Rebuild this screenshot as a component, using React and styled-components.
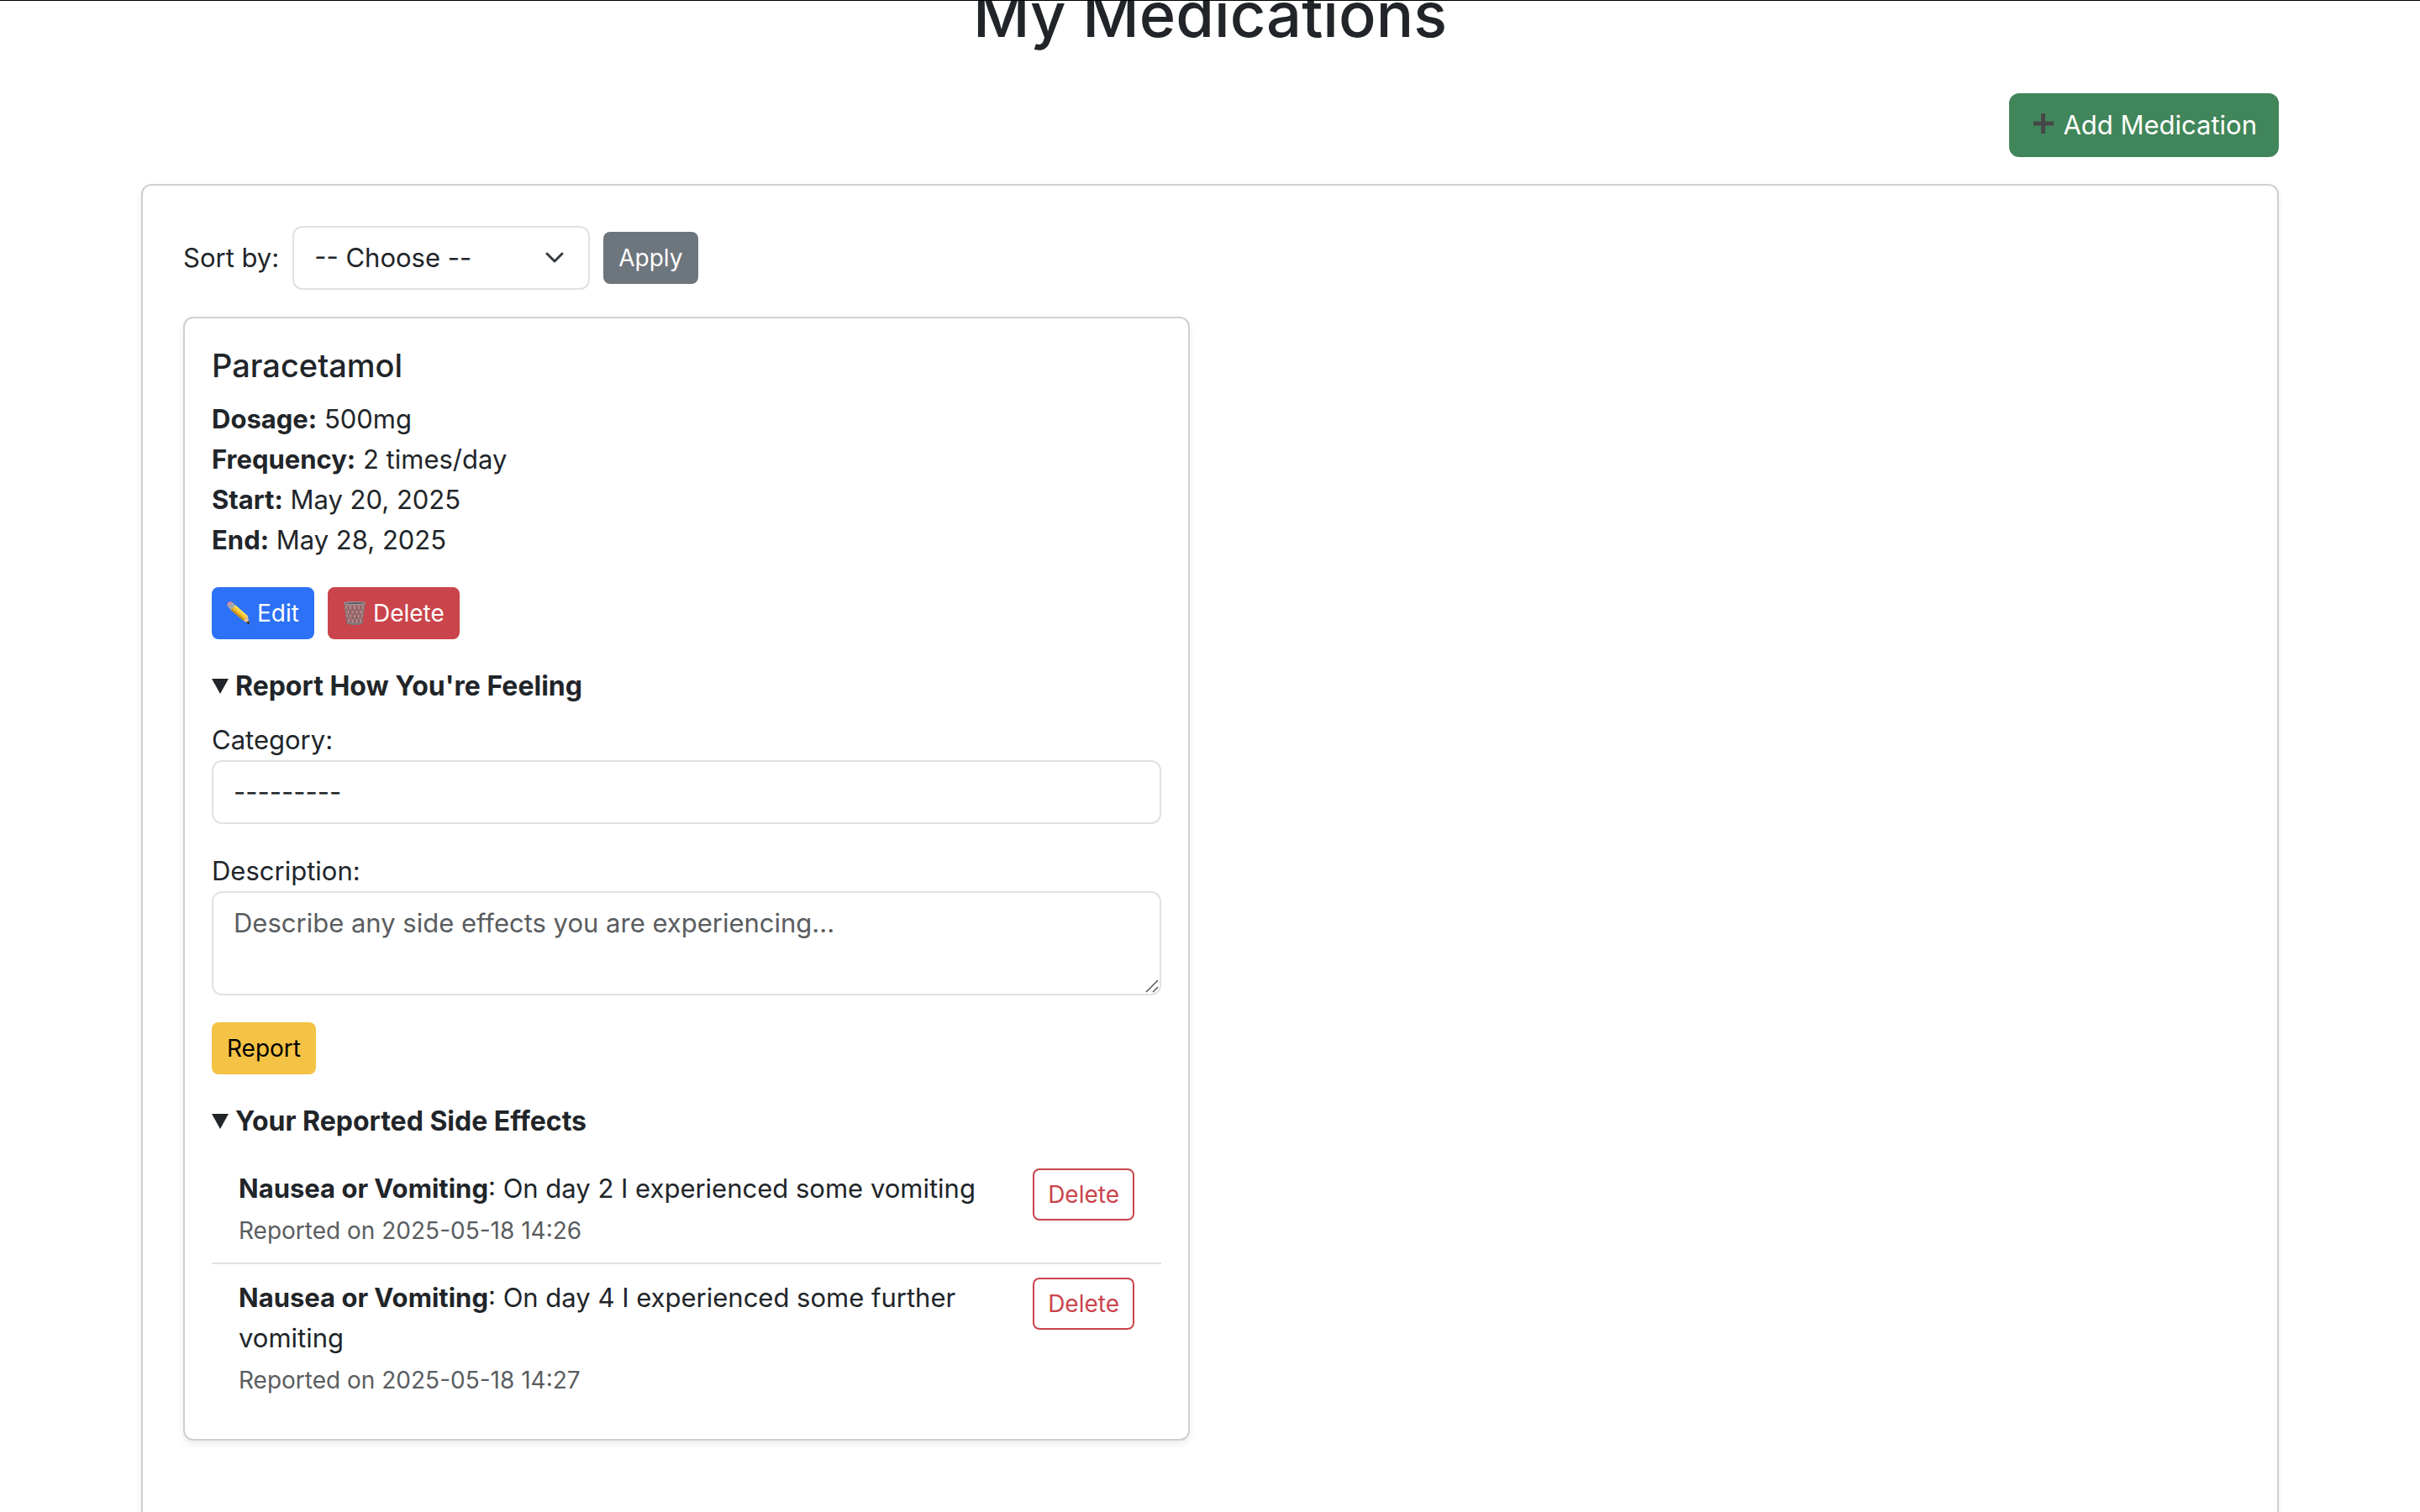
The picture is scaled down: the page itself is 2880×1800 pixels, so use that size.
import React from "react";
import styled, { createGlobalStyle, css } from "styled-components";

const GlobalStyle = createGlobalStyle`
  *, *::before, *::after { box-sizing: border-box; }
  body {
    margin: 0;
    background: #fff;
    color: #212529;
    font-family: Inter, "Liberation Sans", sans-serif;
    font-size: 31px;
    line-height: 48px;
  }
`;

const Page = styled.div`
  min-height: 100vh;
  overflow: hidden;
  border-top: 1px solid #000;
`;

const Container = styled.main`
  max-width: 2640px;
  margin: -32px auto 0;
  padding: 0 48px;
`;

const PageTitle = styled.h1`
  margin: 0 0 46px;
  font-size: 74px;
  font-weight: 500;
  line-height: 96px;
  text-align: center;
`;

const PageActions = styled.div`
  display: flex;
  justify-content: flex-end;
  margin-bottom: 32px;
`;

const variants = {
  success: css`background: #41865a; border-color: #41865a; color: #fff;`,
  primary: css`background: #2c71f6; border-color: #2c71f6; color: #fff;`,
  danger: css`background: #ca444b; border-color: #ca444b; color: #fff;`,
  secondary: css`background: #6d757d; border-color: #6d757d; color: #fff;`,
  warning: css`background: #f4c244; border-color: #f4c244; color: #000;`,
  outlineDanger: css`background: transparent; border-color: #ca444b; color: #ca444b;`,
};

const Button = styled.button`
  display: inline-flex;
  flex: none;
  align-items: center;
  gap: 8px;
  padding: 8px 16px;
  border: 2px solid;
  border-radius: 8px;
  font: inherit;
  font-size: 28px;
  line-height: 42px;
  cursor: pointer;
  ${(p) => variants[p.$variant]}
`;

const LargeButton = styled(Button)`
  padding: 12px 24px;
  border-radius: 12px;
  font-size: 31px;
  line-height: 48px;
`;

const cardFrame = css`
  border: 2px solid #d0d0d1;
  border-radius: 12px;
  background: #fff;
  box-shadow: 0 4px 8px rgba(0, 0, 0, 0.075);
`;

const Panel = styled.section`
  ${cardFrame}
  padding: 48px 48px 96px;
`;

const SortForm = styled.form`
  display: flex;
  align-items: center;
  gap: 16px;
  margin-bottom: 32px;
`;

const fieldFrame = css`
  display: block;
  width: 100%;
  margin: 0;
  padding: 12px 24px;
  border: 2px solid #dee2e6;
  border-radius: 12px;
  background: #fff;
  color: #212529;
  font: inherit;
  appearance: none;
`;

const SelectField = styled.select`
  ${fieldFrame}
  height: 76px;
`;

const TextField = styled.textarea`
  ${fieldFrame}
  resize: none;
  &::placeholder { color: #5a5d60; opacity: 1; }
`;

const Stack = styled.div`
  display: grid;
  width: ${(p) => p.$width || "auto"};
  > * { grid-area: 1 / 1; }
`;

const Chevron = styled.svg`
  align-self: center;
  justify-self: end;
  margin-right: 26px;
  pointer-events: none;
`;

const Grip = styled.svg`
  align-self: end;
  justify-self: end;
  margin: 0 3px 3px 0;
  pointer-events: none;
`;

const CardGrid = styled.div`
  display: grid;
  grid-template-columns: 1fr 1fr;
  gap: 48px;
`;

const Card = styled.article`
  ${cardFrame}
  padding: 32px;
`;

const CardTitle = styled.h2`
  margin: 0 0 16px;
  font-size: 38px;
  font-weight: 500;
  line-height: 48px;
`;

const Facts = styled.p`
  margin: 0 0 32px;
`;

const ButtonRow = styled.div`
  display: flex;
  gap: 16px;
`;

const Disclosure = styled.details`
  margin-top: 32px;
`;

const DisclosureTitle = styled.summary`
  display: flex;
  align-items: center;
  gap: 8px;
  margin-bottom: 16px;
  font-size: 32px;
  font-weight: 700;
  list-style: none;
  cursor: pointer;
  &::before {
    content: "";
    width: 20px;
    height: 18px;
    background: #212529;
    clip-path: polygon(0 0, 100% 0, 50% 100%);
  }
  details:not([open]) > &::before {
    transform: rotate(-90deg);
  }
`;

const Field = styled.div`
  margin-bottom: 32px;
`;

const Label = styled.label`
  display: block;
`;

const ReportList = styled.ul`
  margin: 0;
  padding: 0;
  list-style: none;
`;

const ReportItem = styled.li`
  display: flex;
  align-items: flex-start;
  justify-content: space-between;
  padding: 16px 32px;
  & + & { border-top: 2px solid #dee2e6; }
`;

const ReportDate = styled.small`
  display: block;
  padding-top: 4px;
  color: #5a5d60;
  font-size: 28px;
  line-height: 44px;
`;

const PlusIcon = () => (
  <svg width="30" height="32" viewBox="2 0 30 32" aria-hidden="true">
    <path d="M14 2h5v9.500h10v5H19V26h-5v-9.500H5v-5h9z" fill="#474747" />
  </svg>
);

const PencilIcon = () => (
  <svg width="28" height="28" viewBox="0 0 28 28" aria-hidden="true">
    <path d="M1.200 1.800Q4-.8 6.500.7L8.300 3 3.200 8 .9 5.600Q-.3 3.600 1.200 1.800z" fill="#ef8d92" />
    <path d="M6.300.8 11 5.200 5.200 11 1 6z" fill="#8c98a5" />
    <path d="M7.500 2.200 2.400 7.400M9.200 3.800 3.800 9.200" stroke="#c8d0d7" strokeWidth="1" />
    <path d="M10.200 4.600 24.800 17.200 19.600 22.800 4.800 10.200z" fill="#f4c22c" />
    <path d="M10.200 4.600 24.800 17.200 23.200 19 8.500 6.300z" fill="#ffdc5c" />
    <path d="M6.400 8.600 21.200 21.200 19.600 22.800 4.800 10.200z" fill="#c58a1d" />
    <path d="M24.800 17.200 27 27 19.600 22.800z" fill="#e9bf8b" />
    <path d="M26 22.800 27 27.400 23.200 25.400z" fill="#29292b" />
  </svg>
);

const TrashIcon = () => (
  <svg width="28" height="28" viewBox="0 0 28 28" aria-hidden="true" fill="none">
    <path d="M2 1.500 5 26Q14 29.500 23 26L26 1.500z" fill="#8a6a6c" fillOpacity=".75" />
    <g stroke="#b9a3a4" strokeWidth=".8">
      <path d="M3 7l5 20M3 3l10 24M7 3l11 24M12 3l10 22M17 3l7 15M22 3l3 7" />
      <path d="M25 7l-5 20M25 3 15 27M21 3 10 27M16 3 6 25M11 3 4 18M6 3 3 10" />
      <path d="M3 10h22M4 15h20M4 20h20" stroke="#78595b" />
    </g>
    <path d="M2 2 5 26M26 2l-3 24" stroke="#77777a" />
    <path d="M4.800 24.500Q14 27 23.200 24.500V26.500Q14 29.500 5 26.500z" fill="#7b7b7e" />
    <ellipse cx="14" cy="2" rx="12.500" ry="1.500" fill="#5b5658" stroke="#9b9b9e" strokeWidth="1.200" />
  </svg>
);

const facts = [
  ["Dosage:", "500mg"],
  ["Frequency:", "2 times/day"],
  ["Start:", "May 20, 2025"],
  ["End:", "May 28, 2025"],
];

const reports = [
  { text: "On day 2 I experienced some vomiting", date: "2025-05-18 14:26" },
  { text: "On day 4 I experienced some further vomiting", date: "2025-05-18 14:27" },
];

export default function App() {
  return (
    <Page>
      <GlobalStyle />
      <Container>
        <PageTitle>My Medications</PageTitle>
        <PageActions>
          <LargeButton type="button" $variant="success">
            <PlusIcon />
            Add Medication
          </LargeButton>
        </PageActions>
        <Panel>
          <SortForm onSubmit={(e) => e.preventDefault()}>
            <Label htmlFor="sort">Sort by:</Label>
            <Stack $width="354px">
              <SelectField id="sort">
                <option>-- Choose --</option>
              </SelectField>
              <Chevron width="32" height="24" viewBox="0 0 32 24" fill="none" aria-hidden="true">
                <path d="M7 7l9 9 9-9" stroke="#343a40" strokeWidth="3" strokeLinecap="round" strokeLinejoin="round" />
              </Chevron>
            </Stack>
            <Button type="submit" $variant="secondary">Apply</Button>
          </SortForm>
          <CardGrid>
            <Card>
              <CardTitle>Paracetamol</CardTitle>
              <Facts>
                {facts.map(([name, value]) => (
                  <React.Fragment key={name}>
                    <strong>{name}</strong> {value}
                    <br />
                  </React.Fragment>
                ))}
              </Facts>
              <ButtonRow>
                <Button type="button" $variant="primary">
                  <PencilIcon />
                  Edit
                </Button>
                <Button type="button" $variant="danger">
                  <TrashIcon />
                  Delete
                </Button>
              </ButtonRow>
              <Disclosure open>
                <DisclosureTitle>Report How You're Feeling</DisclosureTitle>
                <form onSubmit={(e) => e.preventDefault()}>
                  <Field>
                    <Label htmlFor="category">Category:</Label>
                    <SelectField id="category">
                      <option>---------</option>
                    </SelectField>
                  </Field>
                  <Field>
                    <Label htmlFor="description">Description:</Label>
                    <Stack>
                      <TextField
                        id="description"
                        rows={2}
                        placeholder="Describe any side effects you are experiencing..."
                      />
                      <Grip width="16" height="16" viewBox="0 0 16 16" aria-hidden="true">
                        <path d="M1 15 15 1M9 15l6-6" stroke="#555" strokeWidth="1.500" />
                      </Grip>
                    </Stack>
                  </Field>
                  <Button type="submit" $variant="warning">Report</Button>
                </form>
              </Disclosure>
              <Disclosure open>
                <DisclosureTitle>Your Reported Side Effects</DisclosureTitle>
                <ReportList>
                  {reports.map((report) => (
                    <ReportItem key={report.date}>
                      <div>
                        <strong>Nausea or Vomiting</strong>: {report.text}
                        <ReportDate>Reported on {report.date}</ReportDate>
                      </div>
                      <Button type="button" $variant="outlineDanger">Delete</Button>
                    </ReportItem>
                  ))}
                </ReportList>
              </Disclosure>
            </Card>
          </CardGrid>
        </Panel>
      </Container>
    </Page>
  );
}
